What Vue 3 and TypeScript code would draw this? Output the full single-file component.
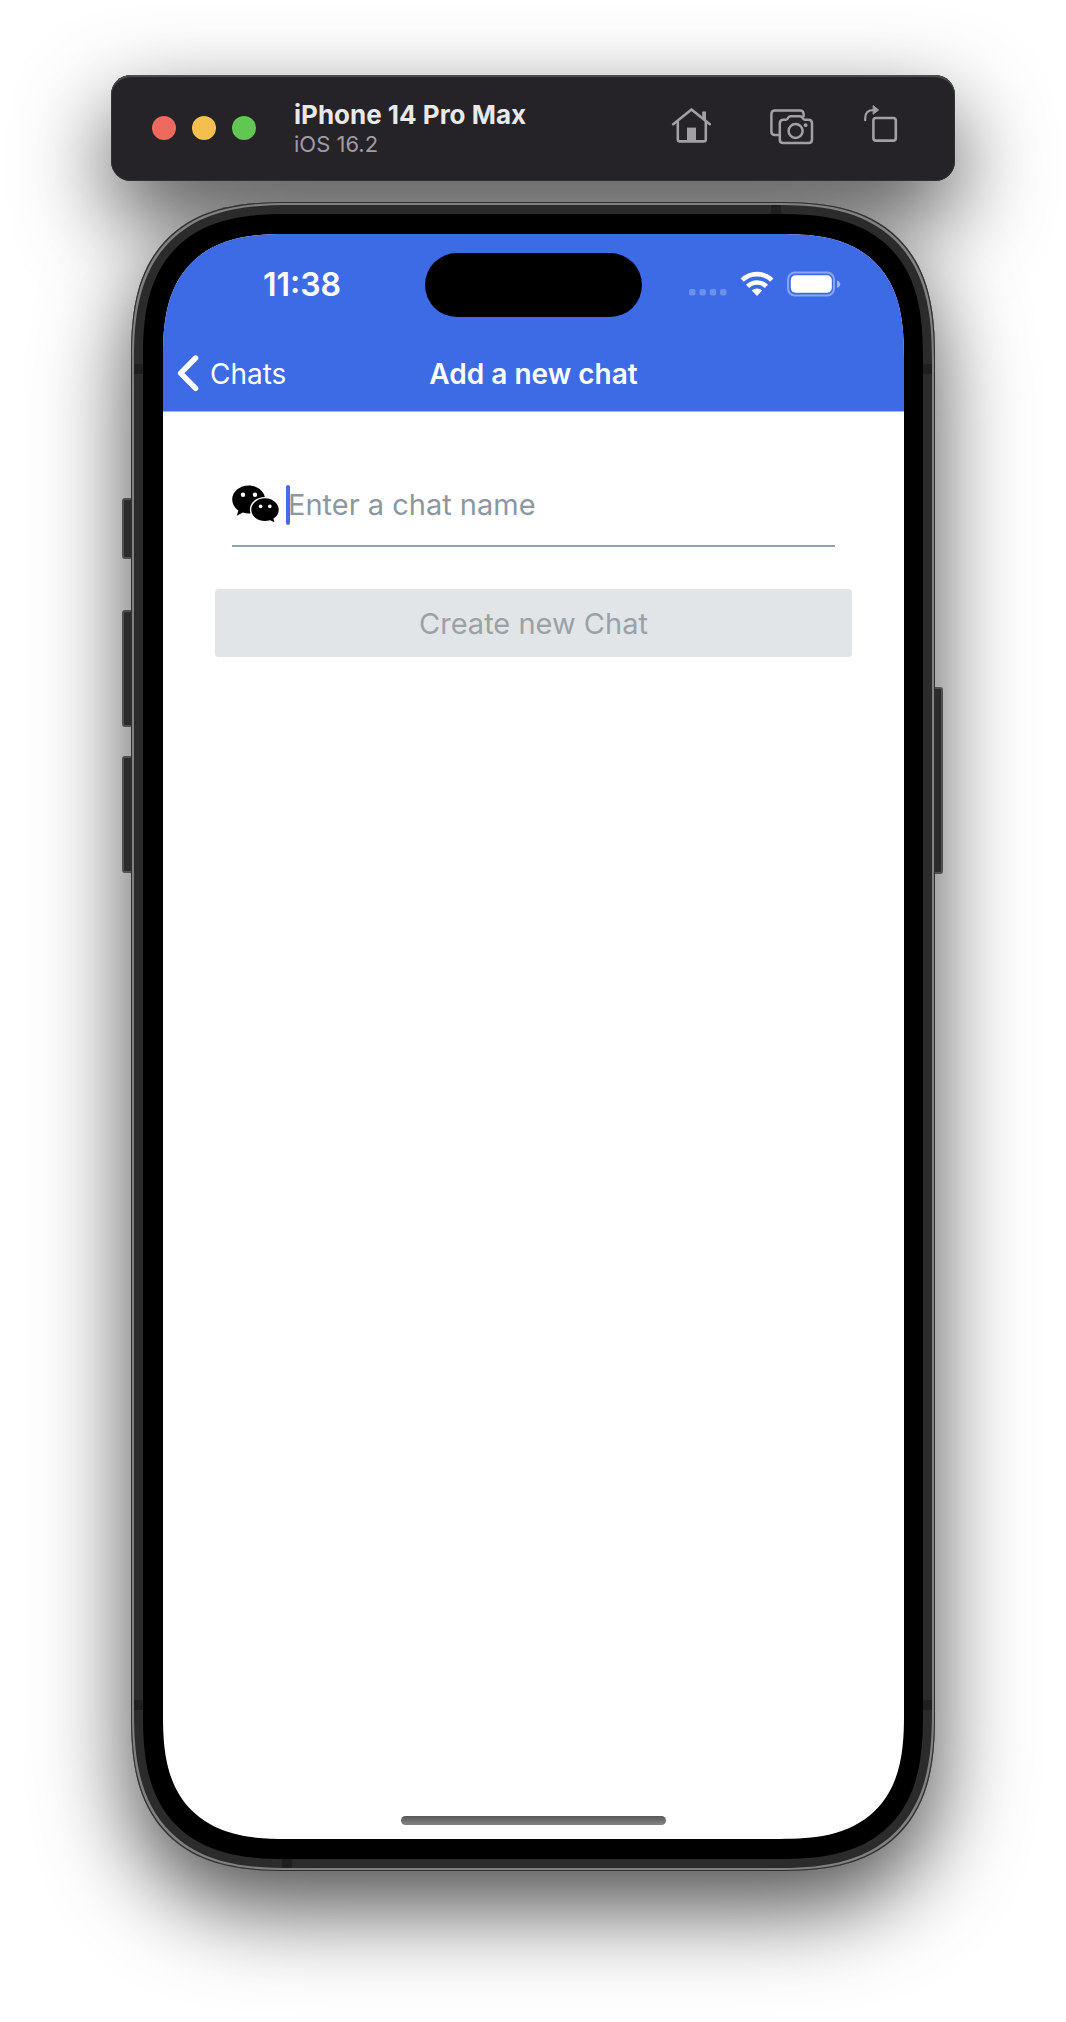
<script setup lang="ts">
import { ref } from 'vue'

const chatName = ref('')
const windowDots = ['close', 'minimise', 'zoom']
const sideKeys = ['mute', 'volume-up', 'volume-down', 'power']
const antennaBands = ['top', 'left-upper', 'right-upper', 'left-lower', 'right-lower', 'bottom']
</script>

<template>
  <main class="desktop">
    <header class="toolbar">
      <div class="window-dots">
        <button v-for="dot in windowDots" :key="dot" type="button" :class="['window-dot', dot]" :aria-label="dot"></button>
      </div>
      <div class="device">
        <h1 class="device-name">iPhone 14 Pro Max</h1>
        <p class="device-os">iOS 16.2</p>
      </div>
      <div class="tools">
        <button type="button" class="tool" aria-label="Home">
          <svg width="40" height="40" viewBox="0 0 40 40" fill="none" stroke="currentColor" stroke-width="2.6" stroke-linecap="round" stroke-linejoin="round">
            <path d="M2.2 19.2 20.5 4.4 38.8 19.2" />
            <path d="M6.8 17v17.200q0 2.200 2.200 2.200h23.600q2.200 0 2.200-2.200V17" />
            <path d="M16 22.600h9v13.800h-9z" fill="currentColor" stroke="none" />
            <path d="M31.200 6.600h3.800v9l-3.800-3z" fill="currentColor" stroke="none" />
          </svg>
        </button>
        <button type="button" class="tool" aria-label="Screenshot">
          <svg width="53" height="40" viewBox="-9 0 53 40" fill="none" stroke="currentColor" stroke-width="2.5" stroke-linecap="round" stroke-linejoin="round">
            <path d="M8 30H5q-3.600 0-3.600-3.600V9Q1.400 5.400 5 5.400h25q3.600 0 3.600 3.600v2.200" />
            <path d="M13 14.800h2.600q1.200 0 2-1.200l.8-1.200q.8-1.200 2.200-1.200h9.400q1.400 0 2.200 1.200l.8 1.200q.8 1.200 2 1.200H38.400q3.600 0 3.600 3.600v16q0 3.600-3.600 3.600H13.400q-3.600 0-3.600-3.600v-16q0-3.600 3.600-3.600z" />
            <circle cx="25.600" cy="26" r="7" />
            <circle cx="35.600" cy="20.200" r="1.900" fill="currentColor" stroke="none" />
          </svg>
        </button>
        <button type="button" class="tool" aria-label="Rotate">
          <svg width="36" height="40" viewBox="0 0 36 40" fill="none" stroke="currentColor" stroke-width="2.600" stroke-linecap="round" stroke-linejoin="round">
            <rect x="9.400" y="13" width="22.400" height="22.600" rx="2.600" />
            <path d="M1.200 15.200v-2q0-8.200 8.400-8.200" stroke-width="2.200" />
            <path d="M9.400.8 14.600 5 9.400 9z" fill="currentColor" stroke-width="1" />
          </svg>
        </button>
      </div>
    </header>

    <section class="phone">
      <span v-for="key in sideKeys" :key="key" :class="['side-key', key]"></span>
      <div class="frame">
        <div class="bezel">
          <div class="screen">
            <div class="app-header">
              <div class="status-bar">
                <time class="clock">11:38</time>
                <div class="island"></div>
                <div class="signals">
                  <svg width="38" height="26" viewBox="0 0 38 26" fill="#fff" fill-opacity=".25">
                    <rect x="0" y="18" width="6.500" height="6.500" rx="2" />
                    <rect x="10.400" y="18" width="6.500" height="6.500" rx="2" />
                    <rect x="20.700" y="18" width="6.500" height="6.500" rx="2" />
                    <rect x="31" y="18" width="6.500" height="6.500" rx="2" />
                  </svg>
                  <svg width="34" height="26" viewBox="0 0 34 26" fill="none" stroke="#fff" stroke-width="4.600">
                    <path d="M2.200 9.200a21 21 0 0 1 29.600 0" />
                    <path d="M7.600 15.400a13.400 13.400 0 0 1 18.800 0" />
                    <path d="M17 25l-5.200-5.400a7.600 7.600 0 0 1 10.400 0z" fill="#fff" stroke="none" />
                  </svg>
                  <svg width="54" height="26" viewBox="0 0 54 26" fill="none">
                    <rect x="1" y="1.500" width="46" height="23" rx="7" stroke="#fff" stroke-opacity=".4" stroke-width="2" />
                    <rect x="3.800" y="4.300" width="41" height="17.400" rx="4.600" fill="#fff" />
                    <path d="M50 9.600q3.200 1 3.200 3.600t-3.200 3.600z" fill="#fff" fill-opacity=".5" />
                  </svg>
                </div>
              </div>
              <nav class="nav-bar">
                <a href="#chats" class="back">
                  <svg width="22" height="38" viewBox="0 0 22 38" fill="none" stroke="#fff" stroke-width="5.400" stroke-linecap="round" stroke-linejoin="round">
                    <path d="M18.600 3 3.600 18.200 18.600 33.400" />
                  </svg>
                  <span>Chats</span>
                </a>
                <h2 class="nav-title">Add a new chat</h2>
              </nav>
            </div>

            <form class="chat-form" @submit.prevent>
              <label class="field">
                <svg class="field-icon" width="48" height="40" viewBox="0 0 48 40" aria-label="Chat name">
                  <path d="M16.700.4C7.600.4.2 6.600.2 14.600c0 4.600 2.400 8.400 6.200 11l-1.600 5.200 6-3.200c1.900.5 3.900.9 5.900.9 9.100 0 16.500-6.200 16.500-13.900S25.800.4 16.700.4z" />
                  <path d="M33 12.600c8 0 14.400 5.300 14.400 12.100 0 3.800-2 7-5.200 9.200l1.400 4.800-5.400-2.800c-1.600.5-3.400.8-5.200.8-8 0-14.400-5.300-14.400-12s6.400-12.100 14.400-12.100z" stroke="#fff" stroke-width="1.400" />
                  <g fill="#fff">
                    <circle cx="11" cy="9.800" r="2.200" />
                    <circle cx="23" cy="9.800" r="2.200" />
                    <circle cx="28.600" cy="21.400" r="1.800" />
                    <circle cx="37.800" cy="21.400" r="1.800" />
                  </g>
                </svg>
                <span class="entry">
                  <input v-model="chatName" class="entry-input" type="text" placeholder="Enter a chat name" />
                  <span class="caret"></span>
                </span>
              </label>
              <button type="submit" class="create" :disabled="!chatName">Create new Chat</button>
            </form>

            <div class="home-indicator"></div>
          </div>
        </div>
      </div>
      <span v-for="band in antennaBands" :key="band" :class="['band', band]"></span>
    </section>
  </main>
</template>

<style>
body {
  margin: 0;
  background: #fff;
}
</style>

<style scoped>
.desktop {
  box-sizing: border-box;
  display: flex;
  flex-direction: column;
  gap: 21px;
  min-height: 100vh;
  padding: 75px 111px 151px;
  overflow: hidden;
  isolation: isolate;
  background: #fff;
  font-family: Inter, "Liberation Sans", sans-serif;
}

.desktop * {
  box-sizing: border-box;
}

h1,
h2,
p {
  margin: 0;
}

button,
input {
  padding: 0;
  border: 0;
  background: none;
  font-family: inherit;
}

/* Both window shadows lie behind both windows */
.toolbar::before,
.phone::before {
  position: absolute;
  z-index: -1;
  inset: 2px;
  border-radius: inherit;
  box-shadow: 0 36px 90px 2px rgba(0, 0, 0, 0.7);
  content: "";
}

/* Simulator toolbar */
.toolbar {
  position: relative;
  display: flex;
  align-items: center;
  height: 106px;
  padding: 0 55px 0 41px;
  border-radius: 20px;
  background: #252328;
  box-shadow: inset 0 2px 1px #4c4e50, inset 0 0 0 1px #303033;
}

.window-dots {
  display: flex;
  gap: 16px;
}

.window-dot {
  width: 24px;
  height: 24px;
  border-radius: 50%;
}

.close {
  background: #ed6a5f;
}

.minimise {
  background: #f5bf4f;
}

.zoom {
  background: #62c655;
}

.device {
  margin-left: 38px;
}

.device-name {
  color: #e9e8ea;
  font-size: 26px;
  font-weight: 700;
  line-height: 32px;
}

.device-os {
  color: #9f9da2;
  font-size: 22px;
  line-height: 26px;
}

.tools {
  display: flex;
  align-items: center;
  gap: 50px;
  margin-left: auto;
  padding-bottom: 6px;
  color: #a2a0a5;
}

.tool {
  display: flex;
  color: inherit;
}

/* Phone body */
.phone {
  position: relative;
  display: flex;
  flex: 1;
  flex-direction: column;
  margin: 0 20px;
  border-radius: 127px;
}

.frame {
  position: relative;
  display: flex;
  flex: 1;
  flex-direction: column;
  padding: 12px;
  border-radius: 127px;
  background: #2b2b2b;
  box-shadow: inset 0 0 0 1px #303030, inset 0 0 0 3px #808080;
}

.bezel {
  display: flex;
  flex: 1;
  flex-direction: column;
  padding: 20px 19px 20px 20px;
  border-radius: 115px;
  background: #000;
}

.screen {
  display: flex;
  flex: 1;
  flex-direction: column;
  overflow: hidden;
  border-radius: 98px;
  background: #fff;
}

@supports (corner-shape: superellipse(1.4)) {
  .frame,
  .phone::before {
    border-radius: 158px;
    corner-shape: superellipse(1.4);
  }

  .bezel {
    border-radius: 145px;
    corner-shape: superellipse(1.4);
  }

  .screen {
    border-radius: 124px;
    corner-shape: superellipse(1.4);
  }
}

.side-key {
  position: absolute;
  left: -9px;
  width: 12px;
  border: 2px solid #505050;
  border-radius: 3px;
  background: #2b2b2b;
}

.mute {
  top: 296px;
  height: 61px;
}

.volume-up {
  top: 408px;
  height: 117px;
}

.volume-down {
  top: 554px;
  height: 117px;
}

.power {
  top: 485px;
  right: -8px;
  left: auto;
  height: 187px;
}

.band {
  position: absolute;
  width: 9px;
  height: 10px;
  background: #1f1f1f;
}

.band.top,
.band.bottom {
  width: 10px;
  height: 9px;
}

.band.top {
  top: 3px;
  right: 154px;
}

.band.bottom {
  bottom: 3px;
  left: 151px;
}

.left-upper,
.left-lower {
  left: 3px;
}

.right-upper,
.right-lower {
  right: 3px;
}

.left-upper,
.right-upper {
  top: 162px;
}

.left-lower,
.right-lower {
  bottom: 161px;
}

/* App header */
.app-header {
  border-bottom: 1px solid #9fb5f2;
  background: #3d6be6;
  color: #fff;
}

.status-bar {
  display: grid;
  grid-template-columns: 1fr 217px 1fr;
  align-items: center;
  height: 101px;
}

.clock {
  padding-left: 16px;
  font-size: 32px;
  font-weight: 600;
  line-height: 36px;
  text-align: center;
}

.island {
  height: 64px;
  border-radius: 32px;
  background: #000;
}

.signals {
  display: flex;
  justify-content: center;
  gap: 13px;
  padding: 0 17px 2px 0;
}

.nav-bar {
  display: grid;
  grid-template-columns: 1fr auto 1fr;
  align-items: center;
  height: 76px;
  padding: 2px 14px 0;
}

.back {
  display: flex;
  align-items: center;
  gap: 11px;
  color: #fff;
  font-size: 28px;
  line-height: 36px;
  text-decoration: none;
}

.nav-title {
  font-size: 28px;
  font-weight: 600;
  line-height: 36px;
}

/* Form */
.chat-form {
  display: flex;
  flex: 1;
  flex-direction: column;
  gap: 42px;
  padding: 52px 52px 0;
}

.field {
  display: flex;
  align-items: center;
  gap: 8px;
  height: 83px;
  margin: 0 17px;
  border-bottom: 2px solid #94a0aa;
}

.entry {
  position: relative;
  display: flex;
  flex: 1;
}

.entry-input {
  width: 100%;
  height: 40px;
  outline: none;
  color: #222;
  font-size: 29px;
}

.entry-input::placeholder {
  color: #8b97a2;
  opacity: 1;
}

.caret {
  position: absolute;
  top: 0;
  left: -2px;
  width: 4px;
  height: 40px;
  border-radius: 2px;
  background: #4a69ea;
}

.create {
  height: 68px;
  border-radius: 4px;
  background: #e1e5e8;
  color: #9ca1a7;
  font-size: 29px;
}

.home-indicator {
  width: 265px;
  height: 9px;
  margin: 0 auto 14px;
  border-radius: 5px;
  background: linear-gradient(#585858, #858585);
}
</style>
